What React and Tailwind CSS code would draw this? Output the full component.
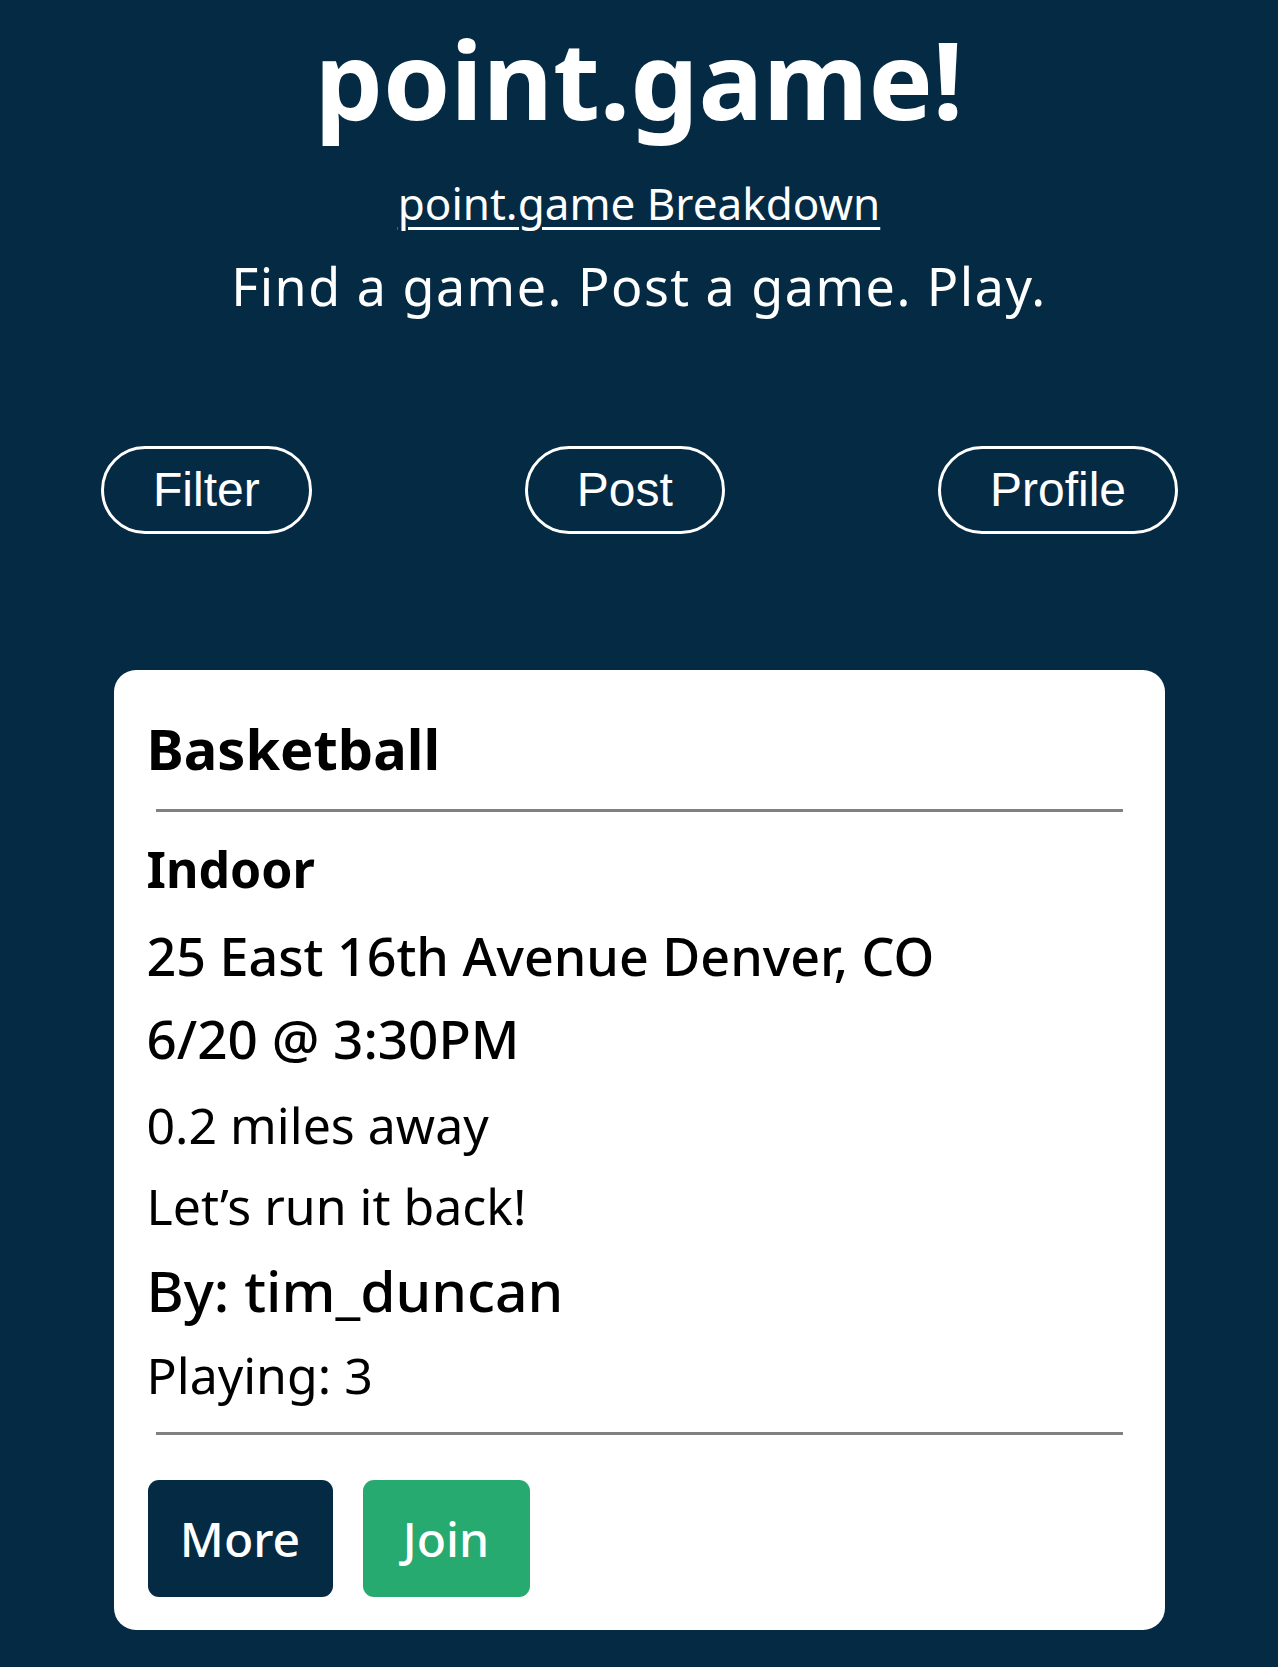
import React from "react";

export default function App() {
  const navBtn =
    "flex h-[88px] items-center rounded-full border-[3px] border-white px-[49px] font-['Liberation_Sans',Arial,sans-serif] text-[48px] text-white";

  return (
    <div className="min-h-screen bg-[#052a44] pb-[37px] font-['Noto_Sans','Open_Sans',sans-serif]">
      {/* header */}
      <header className="flex flex-col items-center text-white">
        <h1 className="pt-[25px] text-[108px] font-bold leading-[107px]">point.game!</h1>
        <a
          href="#"
          className="mt-[45px] text-[44px] leading-[52px] underline decoration-[3px] underline-offset-[7px]"
        >
          point.game Breakdown
        </a>
        <p className="mt-[27px] text-[52px] leading-[60px] tracking-[1.5px]">
          Find a game. Post a game. Play.
        </p>
      </header>

      {/* nav buttons */}
      <nav className="mt-[130px] flex justify-between pl-[101px] pr-[100px]">
        <button className={navBtn}>Filter</button>
        <button className={navBtn}>Post</button>
        <button className={navBtn}>Profile</button>
      </nav>

      {/* game card */}
      <section className="mx-auto mt-[136px] w-[1051px] rounded-[22px] bg-white pb-[33px] pl-[33px] pr-[30px] pt-[48px] text-black">
        <h2 className="text-[56px] font-bold leading-[60px]">Basketball</h2>
        <div className="ml-[9px] mr-[12px] mt-[31px] h-[3px] bg-[#808080]" />
        <h3 className="mt-[27px] text-[50px] font-bold leading-[60px]">Indoor</h3>
        <p className="mt-[27px] text-[52px] font-medium leading-[60px]">
          25 East 16th Avenue Denver, CO
        </p>
        <p className="mt-[23px] text-[53px] font-medium leading-[60px]">6/20 @ 3:30PM</p>
        <p className="mt-[26px] text-[50px] leading-[60px]">0.2 miles away</p>
        <p className="mt-[21px] text-[50px] leading-[60px]">Let’s run it back!</p>
        <p className="mt-[24px] text-[57px] font-medium leading-[60px]">By: tim_duncan</p>
        <p className="mt-[25px] text-[50px] leading-[60px]">Playing: 3</p>
        <div className="ml-[9px] mr-[12px] mt-[27px] h-[3px] bg-[#808080]" />
        <div className="ml-[1px] mt-[45px] flex gap-[30px]">
          <button className="flex h-[117px] w-[185px] items-center justify-center rounded-[11px] bg-[#052a44] text-[48px] font-medium text-white">
            More
          </button>
          <button className="flex h-[117px] w-[167px] items-center justify-center rounded-[11px] bg-[#27aa6f] text-[48px] font-medium text-white">
            Join
          </button>
        </div>
      </section>
    </div>
  );
}
